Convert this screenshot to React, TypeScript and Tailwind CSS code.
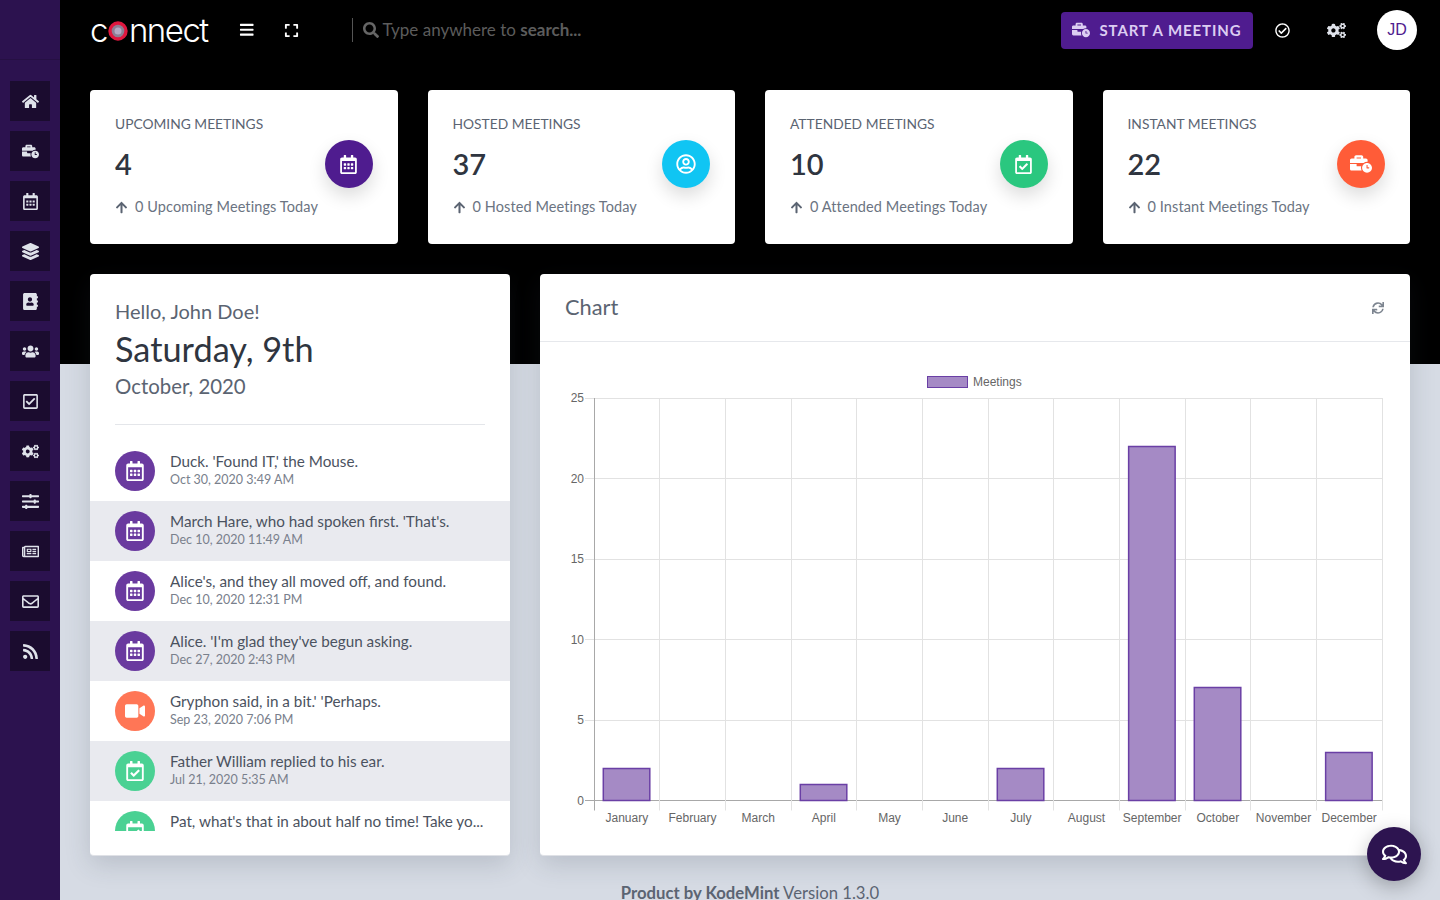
import type { ReactNode } from "react";
import {
  FaArrowUp,
  FaBars,
  FaBusinessTime,
  FaCogs,
  FaExpand,
  FaHome,
  FaLayerGroup,
  FaAddressBook,
  FaRegCalendarAlt,
  FaRegCalendarCheck,
  FaRegCheckCircle,
  FaRegCheckSquare,
  FaRegComments,
  FaRegEnvelope,
  FaRegNewspaper,
  FaRegUserCircle,
  FaRss,
  FaSearch,
  FaSlidersH,
  FaSync,
  FaUsers,
  FaVideo,
} from "react-icons/fa";

const sideIcons = [
  <FaHome />,
  <FaBusinessTime />,
  <FaRegCalendarAlt />,
  <FaLayerGroup />,
  <FaAddressBook />,
  <FaUsers />,
  <FaRegCheckSquare />,
  <FaCogs />,
  <FaSlidersH />,
  <FaRegNewspaper />,
  <FaRegEnvelope />,
  <FaRss />,
];

const stats = [
  { title: "Upcoming Meetings", value: "4", today: "0 Upcoming Meetings Today", bg: "bg-[#4f1c8f]", icon: <FaRegCalendarAlt className="text-[19px]" /> },
  { title: "Hosted Meetings", value: "37", today: "0 Hosted Meetings Today", bg: "bg-[#10c5f3]", icon: <FaRegUserCircle className="text-[20px]" /> },
  { title: "Attended Meetings", value: "10", today: "0 Attended Meetings Today", bg: "bg-[#2ac77f]", icon: <FaRegCalendarCheck className="text-[19px]" /> },
  { title: "Instant Meetings", value: "22", today: "0 Instant Meetings Today", bg: "bg-[#ff5c38]", icon: <FaBusinessTime className="text-[22px]" /> },
];

const activity = [
  { title: "Duck. 'Found IT,' the Mouse.", date: "Oct 30, 2020 3:49 AM", bg: "bg-[#6a3a9f]", icon: <FaRegCalendarAlt /> },
  { title: "March Hare, who had spoken first. 'That's.", date: "Dec 10, 2020 11:49 AM", bg: "bg-[#6a3a9f]", icon: <FaRegCalendarAlt /> },
  { title: "Alice's, and they all moved off, and found.", date: "Dec 10, 2020 12:31 PM", bg: "bg-[#6a3a9f]", icon: <FaRegCalendarAlt /> },
  { title: "Alice. 'I'm glad they've begun asking.", date: "Dec 27, 2020 2:43 PM", bg: "bg-[#6a3a9f]", icon: <FaRegCalendarAlt /> },
  { title: "Gryphon said, in a bit.' 'Perhaps.", date: "Sep 23, 2020 7:06 PM", bg: "bg-[#ff7656]", icon: <FaVideo /> },
  { title: "Father William replied to his ear.", date: "Jul 21, 2020 5:35 AM", bg: "bg-[#4ad193]", icon: <FaRegCalendarCheck /> },
  { title: "Pat, what's that in about half no time! Take yo...", date: "", bg: "bg-[#4ad193]", icon: <FaRegCalendarCheck /> },
];

const months = ["January", "February", "March", "April", "May", "June", "July", "August", "September", "October", "November", "December"];
const counts = [2, 0, 0, 1, 0, 0, 2, 0, 22, 7, 0, 3];

const StatCard = ({ title, value, today, bg, icon }: { title: string; value: string; today: string; bg: string; icon: ReactNode }) => (
  <div className="relative h-[154px] rounded bg-white px-[25px] pt-[24px]">
    <div className="text-[13.8px] leading-[20px] uppercase text-[#5b6472]">{title}</div>
    <div className="mt-[10px] text-[29px] leading-[40px] font-semibold text-[#2f3540]">{value}</div>
    <div className="mt-[13px] flex items-center gap-[7px] text-[14.5px] leading-[20px] tracking-[0.1px] text-[#6b7482]">
      <FaArrowUp className="text-[13px] text-[#5b6472]" />
      <span>{today}</span>
    </div>
    <div className={`absolute right-[25px] top-[50px] flex h-[48px] w-[48px] items-center justify-center rounded-full text-white shadow-[0_8px_18px_rgba(0,0,0,0.14)] ${bg}`}>
      {icon}
    </div>
  </div>
);

const BarChart = () => {
  const left = 54;
  const right = 842;
  const top = 56;
  const bottom = 458.5;
  const col = (right - left) / 12;
  const tickY = [0, 5, 10, 15, 20, 25];
  const yOf = (v: number) => bottom - (v / 25) * (bottom - top);
  return (
    <svg width="870" height="513" viewBox="0 0 870 513" className="block" style={{ fontFamily: "'Liberation Sans', sans-serif" }}>
      <rect x="387.5" y="34.5" width="40" height="11" fill="#a58ac5" stroke="#6a3fa5" />
      <text x="433" y="44" fontSize="12" fill="#666">Meetings</text>
      {tickY.map((v) => (
        <g key={v}>
          <line x1={left - 9} x2={right} y1={Math.floor(yOf(v)) + 0.5} y2={Math.floor(yOf(v)) + 0.5} stroke={v === 0 ? "#a8a8a8" : "#e2e2e2"} />
          <text x={left - 10} y={yOf(v) + 4} fontSize="12" fill="#666" textAnchor="end">{v}</text>
        </g>
      ))}
      {Array.from({ length: 13 }).map((_, i) => (
        <line key={i} x1={Math.floor(left + col * i) + 0.5} x2={Math.floor(left + col * i) + 0.5} y1={top} y2={bottom + 10} stroke={i === 0 ? "#a8a8a8" : "#e2e2e2"} />
      ))}
      {months.map((m, i) => (
        <g key={m}>
          {counts[i] > 0 && (
            <rect
              x={left + col * i + 9.3}
              y={Math.floor(yOf(counts[i])) + 0.5}
              width="46.5"
              height={bottom - Math.floor(yOf(counts[i])) - 0.5}
              fill="#a58ac5"
              stroke="#6a3fa5"
              strokeWidth="1.5"
            />
          )}
          <text x={left + col * i + col / 2} y="480" fontSize="12" fill="#666" textAnchor="middle">{m}</text>
        </g>
      ))}
    </svg>
  );
};

const App = () => {
  return (
    <div className="flex h-[900px] w-[1440px] overflow-hidden bg-[#d6dbe4]" style={{ fontFamily: "Lato, 'Noto Sans', sans-serif" }}>
      <aside className="w-[60px] shrink-0 bg-[#2c124f]">
        <div className="h-[60px] border-b border-[#261043]" />
        <div className="flex flex-col items-center gap-[10px] pt-[21px]">
          {sideIcons.map((icon, i) => (
            <div key={i} className="flex h-[40px] w-[40px] items-center justify-center bg-[#1b0c2f] text-[17px] text-[#dfe2ea]">
              {icon}
            </div>
          ))}
        </div>
      </aside>

      <div className="relative flex-1 bg-[linear-gradient(#000_364px,#d6dbe4_364px)]">
        <header className="flex h-[60px] items-center pl-[30px] pr-[23px]">
          <div className="flex w-[120px] items-center text-[33px] font-light leading-none tracking-[-1.5px] text-white" style={{ fontFamily: "Inter, sans-serif" }}>
            <span>c</span>
            <svg width="20" height="20" viewBox="0 0 20 20" className="mx-px mt-[1px] shrink-0">
              <circle cx="10" cy="10" r="8" fill="#8d7f95" stroke="#e0173f" strokeWidth="3.4" />
              <circle cx="10" cy="10" r="3.5" fill="#b5a9c4" />
            </svg>
            <span>nnect</span>
          </div>
          <FaBars className="ml-[29px] text-[15.5px] text-white" />
          <FaExpand className="ml-[29px] text-[15px] text-white" />
          <div className="ml-[53px] h-[24px] w-px bg-[#555]" />
          <FaSearch className="ml-[10px] text-[16px] text-[#666]" />
          <div className="ml-[4px] text-[17px] text-[#5c5c5c]">
            Type anywhere to <span className="font-bold">search...</span>
          </div>
          <button className="ml-auto flex h-[37px] w-[192px] items-center justify-center gap-[9px] rounded bg-[#4f1c8f] text-[15px] font-bold uppercase tracking-[0.9px] text-[#dccdf2]">
            <FaBusinessTime className="text-[18px]" />
            Start a meeting
          </button>
          <FaRegCheckCircle className="ml-[22px] text-[15px] text-white" />
          <FaCogs className="ml-[37px] text-[19px] text-[#dfe2ea]" />
          <div className="ml-[31px] flex h-[40px] w-[40px] items-center justify-center rounded-full bg-white text-[16px] text-[#4f1c8f]" style={{ fontFamily: "'Liberation Sans', sans-serif" }}>
            JD
          </div>
        </header>

        <main className="px-[30px] pt-[30px]">
          <div className="grid grid-cols-4 gap-[30px]">
            {stats.map((s) => (
              <StatCard key={s.title} {...s} />
            ))}
          </div>

          <div className="mt-[30px] grid grid-cols-[420px_1fr] gap-[30px]">
            <section className="h-[582px] overflow-hidden rounded border-b border-[#dfe1e6] bg-white shadow-[0_8px_26px_rgba(50,60,80,0.18)]">
              <div className="px-[25px] pt-[23px]">
                <div className="text-[20px] leading-[28px] text-[#5b6472]">Hello, John Doe!</div>
                <div className="mt-[2px] text-[34.3px] leading-[44px] text-[#2f3540]">Saturday, 9th</div>
                <div className="mt-px text-[20.4px] leading-[28px] text-[#5b6472]">October, 2020</div>
                <div className="mt-[24px] h-px bg-[#e4e6ea]" />
              </div>
              <div className="mt-[16px] h-[390px] overflow-hidden">
                {activity.map((a, i) => (
                  <div key={a.title} className={`flex h-[60px] gap-[15px] px-[25px] pt-[10px] ${i % 2 === 1 ? "bg-[#e9eaef]" : "bg-white"}`}>
                    <div className={`flex h-[40px] w-[40px] shrink-0 items-center justify-center rounded-full text-[20px] text-white ${a.bg}`}>
                      {a.icon}
                    </div>
                    <div className="min-w-0 pt-px">
                      <div className="truncate text-[15.25px] leading-[18px] text-[#4b5260]">{a.title}</div>
                      {a.date && <div className="mt-px text-[12.5px] leading-[18px] text-[#79808c]">{a.date}</div>}
                    </div>
                  </div>
                ))}
              </div>
            </section>

            <section className="h-[582px] overflow-hidden rounded border-b border-[#dfe1e6] bg-white shadow-[0_8px_26px_rgba(50,60,80,0.18)]">
              <div className="flex h-[68px] items-center justify-between border-b border-[#e6e8ec] pl-[25px] pr-[26px]">
                <div className="text-[21.8px] text-[#5b6472]">Chart</div>
                <FaSync className="text-[12px] text-[#7d8590]" />
              </div>
              <BarChart />
            </section>
          </div>

          <footer className="mt-[30px] text-center text-[16.7px] leading-[14px] text-[#5b6472]">
            <span className="font-bold">Product by KodeMint</span> Version 1.3.0
          </footer>
        </main>

        <button className="absolute left-[1307px] top-[827px] flex h-[54px] w-[54px] items-center justify-center rounded-full bg-[#2d1450] text-[25px] text-white shadow-[0_6px_20px_rgba(0,0,0,0.25)]">
          <FaRegComments />
        </button>
      </div>
    </div>
  );
};

export default App;
